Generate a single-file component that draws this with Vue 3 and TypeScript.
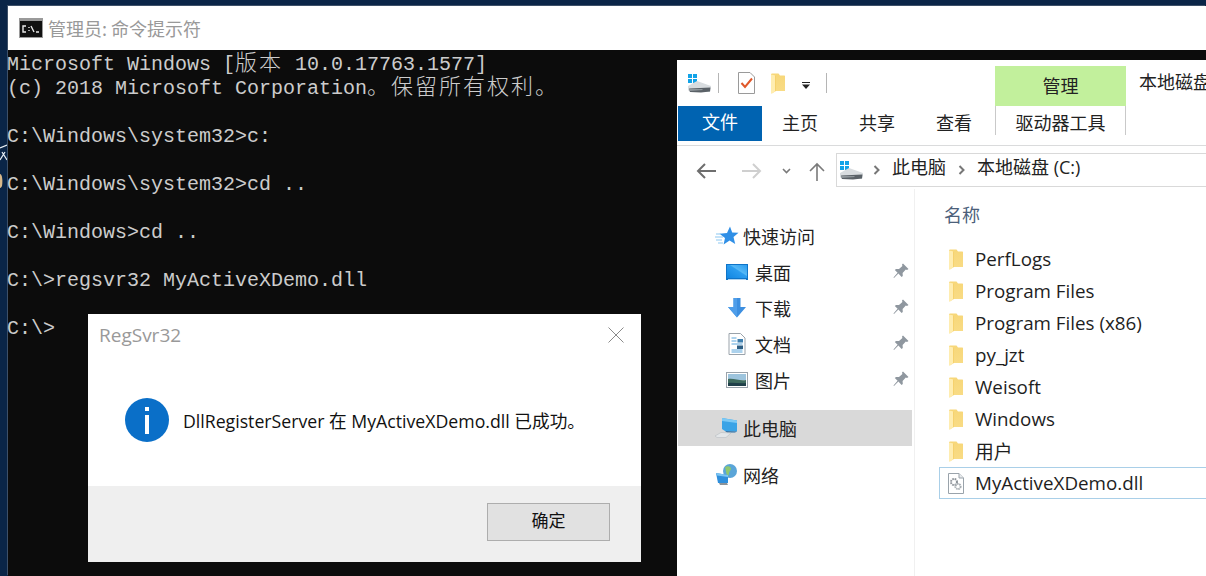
<script setup lang="ts">
const consoleLines: { pre: string; cjk?: string; post?: string }[] = [
  { pre: 'Microsoft Windows [', cjk: '版本', post: ' 10.0.17763.1577]' },
  { pre: '(c) 2018 Microsoft Corporation', cjk: '。保留所有权利。', post: '' },
  { pre: ' ' },
  { pre: 'C:\\Windows\\system32>c:' },
  { pre: ' ' },
  { pre: 'C:\\Windows\\system32>cd ..' },
  { pre: ' ' },
  { pre: 'C:\\Windows>cd ..' },
  { pre: ' ' },
  { pre: 'C:\\>regsvr32 MyActiveXDemo.dll' },
  { pre: ' ' },
  { pre: 'C:\\>' },
]

const tabs = ['主页', '共享', '查看']

interface NavRow { label: string; icon: string; level: number; pin?: boolean; selected?: boolean; gap?: number }
const navRows: NavRow[] = [
  { label: '快速访问', icon: 'star', level: 1 },
  { label: '桌面', icon: 'desktop', level: 2, pin: true },
  { label: '下载', icon: 'download', level: 2, pin: true },
  { label: '文档', icon: 'docs', level: 2, pin: true },
  { label: '图片', icon: 'pics', level: 2, pin: true },
  { label: '此电脑', icon: 'pc', level: 1, selected: true, gap: 12 },
  { label: '网络', icon: 'net', level: 1, gap: 11 },
]

const folders = ['PerfLogs', 'Program Files', 'Program Files (x86)', 'py_jzt', 'Weisoft', 'Windows', '用户']
</script>

<template>
  <div class="desktop">
    <svg class="defs" width="0" height="0">
      <defs>
        <linearGradient id="fold" x1="0" y1="0" x2="0" y2="1">
          <stop offset="0" stop-color="#f7d779" />
          <stop offset="1" stop-color="#f9dc86" />
        </linearGradient>
        <linearGradient id="scr" x1="0" y1="1" x2="1" y2="0">
          <stop offset="0" stop-color="#1186e2" />
          <stop offset="0.55" stop-color="#2b9df0" />
          <stop offset="0.6" stop-color="#55b8f6" />
          <stop offset="1" stop-color="#2a9cf0" />
        </linearGradient>
        <symbol id="i-folder" viewBox="0 0 14 21">
          <path d="M0 1 1 0.5H7.5L9 2.5H13.5L14 3V18H5L0.8 20.5 0 20Z" fill="url(#fold)" />
          <path d="M0 1.5 4.5 2.5V18L0.8 20.5 0 20Z" fill="#ffedb0" />
          <path d="M4.5 2.5V18" stroke="#f4cd62" stroke-width="0.8" />
        </symbol>
        <symbol id="i-drive" viewBox="0 0 23 20">
          <rect x="0" y="1" width="4" height="4" fill="#12a3e8" />
          <rect x="5" y="1" width="4" height="4" fill="#12a3e8" />
          <rect x="0" y="6" width="4" height="4" fill="#12a3e8" />
          <rect x="5" y="6" width="4" height="4" fill="#12a3e8" />
          <path d="M0 13 9 8 23 13 22 19 2 19 0 17Z" fill="#d8dcdf" />
          <path d="M1 15.5 22.5 14.5 22 18.5 13 19.5 2 19Z" fill="#5a6167" />
          <path d="M1 16 14 16 15 17 2 18Z" fill="#8f969b" />
        </symbol>
        <symbol id="i-pin" viewBox="0 0 16 16">
          <path d="M10 0.5 15.5 6 14 7 12.8 6.6 9.6 10 9.8 13 8.6 14 5.4 10.6 1 15 0.5 14.6 4.6 9.8 1.8 7 3 6 6 6 9.4 3 9 1.6Z" fill="#8f979f" />
        </symbol>
        <symbol id="i-star" viewBox="0 0 24 22">
          <path d="M15 1.5 17.2 7.6 23.5 7.8 18.5 12 20.2 19 14.6 15.4 8.6 19.5 10 13 4.5 8.8 12 8Z" fill="#2f8fe6" />
          <path d="M1 9H6M0 12H8M1 15H7M3 18H8" stroke="#8cc8f2" stroke-width="1.2" />
        </symbol>
        <symbol id="i-desktop" viewBox="0 0 24 22">
          <rect x="1" y="3" width="22" height="16" fill="#0f74c8" />
          <rect x="2" y="4" width="20" height="13" fill="url(#scr)" />
          <rect x="3" y="18" width="18" height="0.8" fill="#d6ecfb" />
        </symbol>
        <symbol id="i-download" viewBox="0 0 24 22">
          <path d="M8.5 1H15.5V10H21L12 20.5 3 10H8.5Z" fill="#3d8fe0" />
          <path d="M8.5 1H12V20.5L3 10H8.5Z" fill="#4f9eea" />
        </symbol>
        <symbol id="i-docs" viewBox="0 0 24 22">
          <path d="M4 0.5H15.5L20 5V21.5H4Z" fill="#fff" stroke="#9aa3ab" />
          <path d="M6.5 5H11.5M6.5 8H11.5M6.5 11H17.5M6.5 17H17.5M6.5 19H17.5" stroke="#5aa6dc" stroke-width="1.1" />
          <rect x="12.5" y="6" width="5.5" height="3.5" fill="#3f7fae" />
          <rect x="12" y="12.5" width="6" height="3.5" fill="#2f5f84" />
        </symbol>
        <symbol id="i-pics" viewBox="0 0 24 22">
          <rect x="1.5" y="3.5" width="21" height="15" fill="#fff" stroke="#9aa3ab" />
          <rect x="3" y="5" width="18" height="6" fill="#9dc4dd" />
          <path d="M3 10C9 9 14 12 21 11V17H3Z" fill="#3f6b5e" />
          <path d="M3 14C9 13 15 15 21 14V17H3Z" fill="#20404a" />
        </symbol>
        <symbol id="i-pc" viewBox="0 0 24 22">
          <path d="M7 1 22 3.5V14.5L10 14 7 12Z" fill="#3aa3e6" />
          <path d="M7 1 22 3.5V6L7 4Z" fill="#7cc9f5" />
          <path d="M10 14 22 14.5 20 15.5 12 15.5Z" fill="#2b6ea3" />
          <path d="M0 19 6 15.5 16 16 11 20.5H2Z" fill="#e3e6e8" stroke="#b9bec2" stroke-width="0.6" />
        </symbol>
        <symbol id="i-net" viewBox="0 0 24 22">
          <circle cx="15" cy="7" r="7" fill="#5aa5d8" />
          <path d="M10 3C14 1 18 4 15 7 13 9 15 12 12 12Z" fill="#8fc86f" />
          <path d="M1 9 13 11V19L3 19Z" fill="#2f8fdc" />
          <path d="M1 9 13 11V13L2 11.5Z" fill="#7cc5f2" />
          <path d="M4 19H12L13 21H5Z" fill="#8b9399" />
        </symbol>
        <symbol id="i-dll" viewBox="0 0 16 21">
          <path d="M0.5 0.5H11L15.5 5V20.5H0.5Z" fill="#fff" stroke="#9aa3ab" />
          <path d="M11 0.5V5H15.5" fill="#e8eaec" stroke="#9aa3ab" />
          <circle cx="6" cy="9" r="3" fill="none" stroke="#8c9298" stroke-width="2" stroke-dasharray="1.6 0.8" />
          <circle cx="10" cy="13.5" r="2.6" fill="none" stroke="#a6acb1" stroke-width="2" stroke-dasharray="1.5 0.7" />
        </symbol>
      </defs>
    </svg>

    <svg class="sliver" width="7" height="60" viewBox="0 0 7 60">
      <path d="M0 8 7 5M2 12 7 20M0 20 5 12" stroke="#e8eef4" stroke-width="1.2" fill="none" />
      <path d="M0 34C2 34 3 40 2 46 1 48 0 48 0 48Z" fill="#d9b98a" />
    </svg>

    <section class="cmd">
      <header class="cmd-title">
        <svg class="cmd-icon" width="24" height="20" viewBox="0 0 24 20">
          <rect x="0" y="0" width="24" height="20" fill="#9a9a9a" />
          <rect x="1" y="3" width="22" height="16" fill="#111" />
          <path d="M7 8H4V14H7M10 9V10M10 12V13M12 8 15 14M17 14H20" fill="none" stroke="#e8e8e8" stroke-width="1.4" />
        </svg>
        <span>管理员: 命令提示符</span>
      </header>
      <div class="cmd-body">
        <div v-for="(l, i) in consoleLines" :key="i" class="cmd-line">{{ l.pre }}<span v-if="l.cjk" class="cmd-cjk">{{ l.cjk }}</span>{{ l.post }}</div>
      </div>
    </section>

    <section class="explorer">
      <div class="titlebar">
        <svg class="qa-drive" width="23" height="20"><use href="#i-drive" /></svg>
        <i class="qa-sep"></i>
        <svg class="qa-doc" width="17" height="22" viewBox="0 0 17 22">
          <path d="M0.5 0.5H12L16.5 5V21.5H0.5Z" fill="#fff" stroke="#9a9a9a" />
          <path d="M3.5 11 7 15 14 6.5" fill="none" stroke="#e0582a" stroke-width="2" />
        </svg>
        <svg class="qa-folder" width="14" height="21"><use href="#i-folder" /></svg>
        <svg class="qa-drop" width="8" height="7" viewBox="0 0 8 7">
          <path d="M0 0H8V1H0ZM0 2.5H8L4 7Z" fill="#222" />
        </svg>
        <i class="qa-sep qa-sep2"></i>
        <div class="ctx-tab">管理</div>
        <div class="win-name">本地磁盘</div>
      </div>
      <nav class="ribbon">
        <div class="file-tab">文件</div>
        <div v-for="t in tabs" :key="t" class="rtab">{{ t }}</div>
        <div class="drive-tab">驱动器工具</div>
      </nav>
      <div class="addr-row">
        <svg class="nav-btn back" width="20" height="16" viewBox="0 0 20 16">
          <path d="M20 8H2M9 1 2 8 9 15" fill="none" stroke="#6e6e6e" stroke-width="2" />
        </svg>
        <svg class="nav-btn fwd" width="20" height="16" viewBox="0 0 20 16">
          <path d="M0 8H18M11 1 18 8 11 15" fill="none" stroke="#cfcfcf" stroke-width="2" />
        </svg>
        <svg class="nav-btn chev" width="9" height="6" viewBox="0 0 9 6">
          <path d="M1 1 4.5 4.5 8 1" fill="none" stroke="#7a7a7a" stroke-width="1.6" />
        </svg>
        <svg class="nav-btn up" width="16" height="19" viewBox="0 0 16 19">
          <path d="M8 19V2M1 9 8 2 15 9" fill="none" stroke="#7a7a7a" stroke-width="1.6" />
        </svg>
        <div class="addr">
          <svg class="addr-drive" width="23" height="20"><use href="#i-drive" /></svg>
          <svg class="crumb" width="8" height="10" viewBox="0 0 8 10"><path d="M1.5 1 5.5 5 1.5 9" fill="none" stroke="#777" stroke-width="2" /></svg>
          <span class="crumb-text">此电脑</span>
          <svg class="crumb" width="8" height="10" viewBox="0 0 8 10"><path d="M1.5 1 5.5 5 1.5 9" fill="none" stroke="#777" stroke-width="2" /></svg>
          <span class="crumb-text">本地磁盘 (C:)</span>
        </div>
      </div>
      <div class="main">
        <aside class="nav">
          <div
            v-for="r in navRows"
            :key="r.label"
            class="nav-row"
            :class="[`lv${r.level}`, { selected: r.selected }]"
            :style="r.gap ? { marginTop: r.gap + 'px' } : undefined"
          >
            <span class="nav-ico"><svg width="24" height="22"><use :href="`#i-${r.icon}`" /></svg></span>
            <span class="nav-label">{{ r.label }}</span>
            <svg v-if="r.pin" class="pin" width="16" height="16"><use href="#i-pin" /></svg>
          </div>
        </aside>
        <div class="list">
          <div class="col-head">名称</div>
          <div v-for="f in folders" :key="f" class="file">
            <svg class="file-ico" width="14" height="21"><use href="#i-folder" /></svg>
            <span>{{ f }}</span>
          </div>
          <div class="file active">
            <svg class="file-ico" width="16" height="21"><use href="#i-dll" /></svg>
            <span>MyActiveXDemo.dll</span>
          </div>
        </div>
      </div>
    </section>

    <section class="dialog">
      <div class="dlg-head">
        <span>RegSvr32</span>
        <svg width="16" height="16" viewBox="0 0 16 16"><path d="M0.5 0.5 15.5 15.5M15.5 0.5 0.5 15.5" stroke="#8a8a8a" stroke-width="1" /></svg>
      </div>
      <div class="dlg-body">
        <svg width="44" height="44" viewBox="0 0 44 44">
          <circle cx="22" cy="22" r="22" fill="#0a6fc8" />
          <rect x="20" y="9" width="4" height="4" fill="#fff" />
          <rect x="20" y="17" width="4" height="19" fill="#fff" />
        </svg>
        <span>DllRegisterServer 在 MyActiveXDemo.dll 已成功。</span>
      </div>
      <div class="dlg-foot">
        <div class="ok">确定</div>
      </div>
    </section>
  </div>
</template>

<style scoped>
.desktop {
  position: relative;
  width: 1206px;
  height: 576px;
  overflow: hidden;
  background: #0a2547;
  font-family: "Open Sans", "Noto Sans CJK SC", sans-serif;
}
.defs { position: absolute; }
.sliver { position: absolute; left: 0; top: 140px; }

.cmd {
  position: absolute;
  left: 8px;
  top: 6px;
  width: 1198px;
  height: 570px;
  display: flex;
  flex-direction: column;
  background: #0c0c0c;
  box-shadow: -1px -1px 0 #3d5068;
}
.cmd-title {
  height: 44px;
  flex: none;
  background: #fff;
  display: flex;
  align-items: center;
  gap: 5px;
  padding: 0 0 1px 11px;
  box-sizing: border-box;
  color: #999;
  font-size: 18px;
  font-family: "Noto Sans CJK SC", sans-serif;
}
.cmd-body {
  padding-top: 3px;
  margin-left: -1px;
  font-family: "Liberation Mono", monospace;
  font-size: 20px;
  line-height: 24px;
  color: #cccccc;
}
.cmd-line { height: 24px; white-space: pre; }
.cmd-cjk {
  font-family: "Noto Sans CJK SC", sans-serif;
  font-size: 22px;
  letter-spacing: 2px;
  line-height: 0;
  font-weight: 300;
}

.explorer {
  position: absolute;
  left: 677px;
  top: 60px;
  width: 529px;
  height: 516px;
  overflow: hidden;
  background: #fff;
  color: #222;
  display: flex;
  flex-direction: column;
  font-family: "Open Sans", "Noto Sans CJK SC", sans-serif;
}
.titlebar {
  height: 46px;
  flex: none;
  display: flex;
  align-items: center;
  padding-left: 11px;
}
.titlebar > * { flex: none; }
.qa-sep { width: 1px; height: 20px; background: #b5b5b5; margin-left: 7px; }
.qa-doc { margin-left: 19px; }
.qa-folder { margin-left: 16px; }
.qa-drop { margin-left: 17px; margin-top: 4px; }
.qa-sep2 { margin-left: 16px; }
.ctx-tab {
  align-self: stretch;
  margin-top: 6px;
  margin-left: 168px;
  width: 131px;
  background: #c2f09c;
  text-align: center;
  line-height: 40px;
  font-size: 18px;
}
.win-name {
  margin-left: 13px;
  margin-top: -4px;
  white-space: nowrap;
  font-size: 18px;
}
.ribbon {
  height: 39px;
  flex: none;
  display: flex;
  align-items: flex-start;
  border-bottom: 1px solid #dadbdc;
  box-sizing: content-box;
  font-size: 18px;
  padding-left: 1px;
}
.ribbon > * { flex: none; }
.file-tab {
  width: 84px;
  height: 35px;
  line-height: 33px;
  background: #0063b1;
  color: #fff;
  text-align: center;
}
.rtab { margin-left: 20px; width: 36px; line-height: 34px; white-space: nowrap; }
.rtab + .rtab { margin-left: 41px; }
.drive-tab {
  margin-left: 23px;
  width: 129px;
  height: 29px;
  line-height: 34px;
  text-align: center;
  border-left: 1px solid #c9c9c9;
  border-right: 1px solid #c9c9c9;
}
.addr-row {
  flex: none;
  height: 44px;
  padding-top: 7px;
  display: flex;
  align-items: flex-start;
}
.nav-btn { flex: none; }
.back { margin: 10px 0 0 19px; }
.fwd { margin: 10px 0 0 26px; }
.chev { margin: 15px 0 0 20px; }
.up { margin: 9px 0 0 18px; }
.addr {
  margin-left: 11px;
  width: 400px;
  height: 34px;
  flex: none;
  box-sizing: border-box;
  border: 1px solid #d9d9d9;
  display: flex;
  align-items: center;
  padding-left: 3px;
  font-size: 18px;
  white-space: nowrap;
}
.crumb-text { line-height: 26px; padding-bottom: 6px; margin-right: 2px; }
.crumb { margin: 0 11px 0 10px; flex: none; }
.main { flex: 1; display: flex; min-height: 0; margin-top: -8px; }
.nav {
  width: 238px;
  flex: none;
  box-sizing: border-box;
  border-right: 1px solid #f0f0f0;
  padding-top: 29px;
  font-size: 18px;
}
.nav-row {
  height: 36px;
  display: flex;
  align-items: center;
  position: relative;
  margin-left: 1px;
  width: 234px;
  box-sizing: border-box;
}
.nav-row.lv1 { padding-left: 37px; }
.nav-row.lv2 { padding-left: 47px; }
.nav-row.selected { background: #d9d9d9; }
.nav-ico { width: 24px; height: 22px; flex: none; display: flex; }
.lv1 .nav-label { margin-left: 4px; }
.lv2 .nav-label { margin-left: 6px; }
.pin { position: absolute; left: 215px; top: 9px; }
.list { flex: none; width: 400px; padding-left: 24px; box-sizing: border-box; }
.col-head {
  height: 54px;
  box-sizing: border-box;
  padding: 12px 0 0 5px;
  font-size: 18px;
  color: #4c607a;
}
.file {
  height: 32px;
  display: flex;
  align-items: center;
  padding-left: 10px;
  font-size: 18.8px;
  white-space: nowrap;
  box-sizing: border-box;
  color: #1e1e1e;
}
.file-ico { flex: none; margin-right: 12px; }
.file.active { border: 1px solid #a9cfe8; padding-left: 8px; }
.file.active .file-ico { margin-right: 11px; }

.dialog {
  position: absolute;
  left: 88px;
  top: 314px;
  width: 553px;
  height: 248px;
  background: #fff;
  display: flex;
  flex-direction: column;
  color: #111;
}
.dlg-head {
  height: 42px;
  flex: none;
  display: flex;
  justify-content: space-between;
  align-items: center;
  padding: 0 17px 0 11px;
  font-size: 19px;
  color: #999;
}
.dlg-body {
  flex: 1;
  display: flex;
  align-items: center;
  gap: 14px;
  padding: 0 0 2px 37px;
  font-size: 17.7px;
  white-space: nowrap;
}
.dlg-foot {
  height: 76px;
  flex: none;
  background: #efefef;
  display: flex;
  justify-content: flex-end;
  padding: 17px 31px 0 0;
  box-sizing: border-box;
}
.ok {
  width: 123px;
  height: 38px;
  box-sizing: border-box;
  background: #e1e1e1;
  border: 1px solid #adadad;
  text-align: center;
  line-height: 34px;
  font-size: 17px;
}
</style>
